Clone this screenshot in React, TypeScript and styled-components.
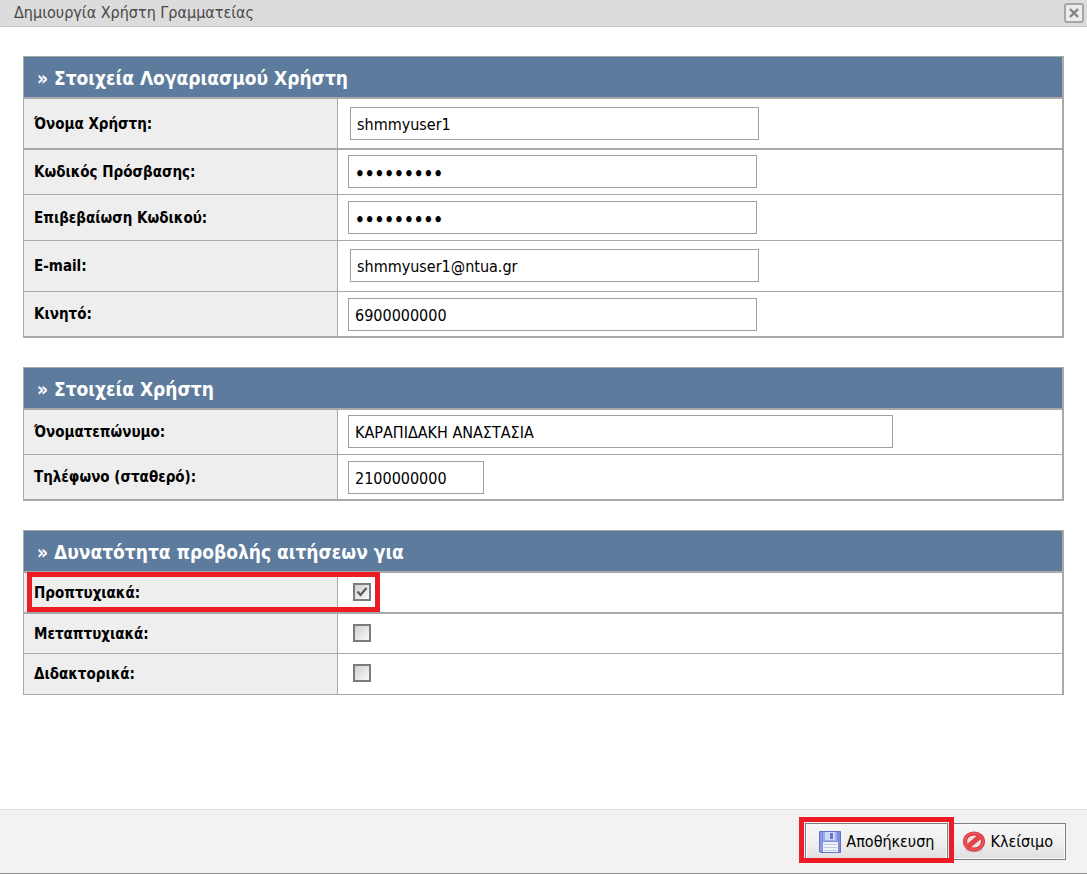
import React from "react";
import styled, { createGlobalStyle, css } from "styled-components";

const FONT = `"DejaVu Sans Condensed", "DejaVu Sans", sans-serif`;
const LINE = "#a9a9a9";
const RED = "#ed1c24";

const GlobalStyle = createGlobalStyle`
  *, *::before, *::after { box-sizing: border-box; }
  body { margin: 0; background: #fff; color: #000; font-family: ${FONT}; font-size: 16px; }
`;

const Dialog = styled.form`
  display: flex;
  flex-direction: column;
  min-height: 100vh;
  border-bottom: 1px solid #8c8c8c;
`;

const TitleBar = styled.header`
  display: flex;
  align-items: center;
  justify-content: space-between;
  height: 27px;
  padding: 0 3px 0 14px;
  background: #dcdcdc;
  border-bottom: 1px solid #c6c6c6;
`;

const Title = styled.h1`
  margin: 0;
  font-size: 16px;
  font-weight: 400;
  line-height: 20px;
  color: #484848;
`;

const DismissButton = styled.button`
  display: grid;
  place-items: center;
  width: 20px;
  height: 20px;
  padding: 0;
  border: 2px solid #a6a6a6;
  border-radius: 3px;
  background: #ececec;
`;

const Content = styled.main`
  flex: 1;
  display: flex;
  flex-direction: column;
  gap: 29px;
  padding: 29px 23px 40px;
`;

const Panel = styled.section<{ $thinEnd?: boolean }>`
  border: 1px solid ${LINE};
  border-right-width: 2px;
  border-bottom-width: ${(p) => (p.$thinEnd ? 1 : 2)}px;
`;

const PanelTitle = styled.h2`
  height: 42px;
  margin: 0;
  padding-left: 13px;
  border-bottom: 2px solid ${LINE};
  background: #5d7b9d;
  color: #fff;
  font-size: 19px;
  font-weight: 700;
  line-height: 42px;
`;

type Size = "tall" | "normal" | "tight" | "check";

const sizes: Record<Size, { height: number; top: number }> = {
  tall: { height: 51, top: 8 },
  normal: { height: 46, top: 6 },
  tight: { height: 45, top: 5 },
  check: { height: 40, top: 10 },
};

const Row = styled.div<{ $size: Size; $thick?: boolean }>`
  position: relative;
  display: grid;
  grid-template-columns: 314px 1fr;
  min-height: ${(p) => sizes[p.$size].height + (p.$size === "check" && p.$thick ? 1 : 0)}px;
  border-bottom: ${(p) => (p.$thick ? 2 : 1)}px solid ${LINE};

  &:last-child {
    min-height: ${(p) => sizes[p.$size].height - (p.$size === "check" ? 0 : 2)}px;
    border-bottom: 0;
  }
`;

const RowLabel = styled.label`
  display: flex;
  align-items: center;
  padding-left: 10px;
  background: #eee;
  border-right: 1px solid ${LINE};
  font-size: 15px;
  font-weight: 700;
`;

const RowField = styled.div<{ $size: Size }>`
  padding: ${(p) => sizes[p.$size].top}px 0 0 ${(p) =>
    p.$size === "check" ? 15 : p.$size === "tall" ? 12 : 10}px;
`;

const TextInput = styled.input<{ $width: number }>`
  display: block;
  width: ${(p) => p.$width}px;
  max-width: 100%;
  height: 33px;
  padding: 2px 6px 0;
  border: 1px solid #a0a0a0;
  background: #fff;
  color: #000;
  font-family: ${FONT};
  font-size: 16px;

  &[type="password"] { font-size: 17px; font-weight: 700; padding: 4px 6px 0; }
`;

const CheckBox = styled.span`
  display: grid;
  width: 18px;
  height: 18px;

  > * { grid-area: 1 / 1; }
`;

const CheckInput = styled.input`
  appearance: none;
  width: 18px;
  height: 18px;
  margin: 0;
  border: 2px solid #7c7c7c;
  background: linear-gradient(135deg, #d0d0d0, #fbfbfb);

  & + svg { visibility: hidden; }
  &:checked + svg { visibility: visible; }
`;

const CheckMark = styled.svg`
  width: 18px;
  height: 18px;
  pointer-events: none;
`;

const highlight = css`
  position: absolute;
  z-index: 1;
  border: 5px solid ${RED};
  pointer-events: none;
`;

const RowHighlight = styled.span`
  ${highlight}
  top: -1px;
  left: 3px;
  width: 353px;
  height: 40px;
`;

const ButtonHighlight = styled.span`
  ${highlight}
  inset: -7px -7px -4px;
`;

const Footer = styled.footer`
  display: flex;
  justify-content: flex-end;
  align-items: flex-start;
  gap: 2px;
  height: 64px;
  padding: 13px 21px 0;
  border-top: 1px solid #dedede;
  background: #f2f2f2;
`;

const Action = styled.button<{ $pad: number }>`
  position: relative;
  display: flex;
  align-items: center;
  gap: 5px;
  height: 37px;
  padding: 0 ${(p) => p.$pad}px;
  border: 1px solid #7f7f7f;
  background: linear-gradient(#f6f6f6, #f0f0f0 50%, #dfdfdf);
  box-shadow: inset 0 0 0 1px #fbfbfb;
  color: #000;
  font-family: ${FONT};
  font-size: 16px;

  svg { width: 22px; height: 22px; }
`;

function DiskIcon() {
  return (
    <svg viewBox="0 0 22 22" aria-hidden="true">
      <path d="M0.5 0.5H21.5V21.5H1.5L0.5 20.5Z" fill="#7f8bdc" stroke="#6470c4" />
      <path d="M2 2V20" stroke="#a4aeee" strokeWidth="1" />
      <path d="M4 1H18V10H4Z" fill="#9dacec" />
      <path d="M6 1H16V9H6Z" fill="#cfdaf8" />
      <path d="M11 2H14V8H11Z" fill="#6577cc" />
      <path d="M4 11H19V21H4Z" fill="#f1f3fb" />
      <path d="M5 13.500H18M5 16.500H18M5 19.500H18" stroke="#c3c8da" />
    </svg>
  );
}

function ForbiddenIcon() {
  return (
    <svg viewBox="0 0 22 22" aria-hidden="true">
      <ellipse cx="11" cy="19" rx="9" ry="2.500" fill="#d2c6c6" />
      <ellipse cx="11" cy="10.500" rx="9" ry="8" fill="#ece4e4" stroke="#d9363a" strokeWidth="4" />
      <ellipse cx="11" cy="10.300" rx="9.200" ry="8.200" fill="none" stroke="#ee5c5f" strokeWidth="1.600" />
      <path d="M4.500 16L17.500 5" stroke="#e2464a" strokeWidth="5" />
    </svg>
  );
}

interface FieldProps {
  id: string;
  label: string;
  value: string;
  size: Size;
  type?: string;
  width?: number;
  thick?: boolean;
}

function Field({ id, label, value, size, type = "text", width = 409, thick }: FieldProps) {
  return (
    <Row $size={size} $thick={thick}>
      <RowLabel htmlFor={id}>{label}</RowLabel>
      <RowField $size={size}>
        <TextInput id={id} type={type} defaultValue={value} $width={width} />
      </RowField>
    </Row>
  );
}

interface OptionProps {
  id: string;
  label: string;
  checked?: boolean;
  thick?: boolean;
  marked?: boolean;
}

function Option({ id, label, checked, thick, marked }: OptionProps) {
  return (
    <Row $size="check" $thick={thick}>
      <RowLabel htmlFor={id}>{label}</RowLabel>
      <RowField $size="check">
        <CheckBox>
          <CheckInput id={id} type="checkbox" defaultChecked={checked} />
          <CheckMark viewBox="0 0 18 18" aria-hidden="true">
            <path d="M4.500 8.500L7.500 12L13.500 5" fill="none" stroke="#606060" strokeWidth="2.400" />
          </CheckMark>
        </CheckBox>
      </RowField>
      {marked && <RowHighlight />}
    </Row>
  );
}

export default function App() {
  return (
    <>
      <GlobalStyle />
      <Dialog onSubmit={(e) => e.preventDefault()}>
        <TitleBar>
          <Title>Δημιουργία Χρήστη Γραμματείας</Title>
          <DismissButton type="button" aria-label="Κλείσιμο παραθύρου">
            <svg width="10" height="10" viewBox="0 0 10 10" aria-hidden="true">
              <path d="M1 1L9 9M9 1L1 9" stroke="#828282" strokeWidth="2.400" />
            </svg>
          </DismissButton>
        </TitleBar>
        <Content>
          <Panel>
            <PanelTitle>» Στοιχεία Λογαριασμού Χρήστη</PanelTitle>
            <Field id="username" label="Όνομα Χρήστη:" value="shmmyuser1" size="tall" thick />
            <Field id="password" label="Κωδικός Πρόσβασης:" value="123456789" type="password" size="tight" />
            <Field id="confirm" label="Επιβεβαίωση Κωδικού:" value="123456789" type="password" size="normal" />
            <Field id="email" label="E-mail:" value="shmmyuser1@ntua.gr" type="email" size="tall" />
            <Field id="mobile" label="Κινητό:" value="6900000000" type="tel" size="normal" />
          </Panel>
          <Panel>
            <PanelTitle>» Στοιχεία Χρήστη</PanelTitle>
            <Field id="fullname" label="Όνοματεπώνυμο:" value="ΚΑΡΑΠΙΔΑΚΗ ΑΝΑΣΤΑΣΙΑ" size="tight" width={545} />
            <Field id="phone" label="Τηλέφωνο (σταθερό):" value="2100000000" type="tel" size="normal" width={136} />
          </Panel>
          <Panel $thinEnd>
            <PanelTitle>» Δυνατότητα προβολής αιτήσεων για</PanelTitle>
            <Option id="undergraduate" label="Προπτυχιακά:" checked thick marked />
            <Option id="postgraduate" label="Μεταπτυχιακά:" />
            <Option id="doctoral" label="Διδακτορικά:" />
          </Panel>
        </Content>
        <Footer>
          <Action type="submit" $pad={13}>
            <DiskIcon />
            Αποθήκευση
            <ButtonHighlight />
          </Action>
          <Action type="button" $pad={12}>
            <ForbiddenIcon />
            Κλείσιμο
          </Action>
        </Footer>
      </Dialog>
    </>
  );
}
